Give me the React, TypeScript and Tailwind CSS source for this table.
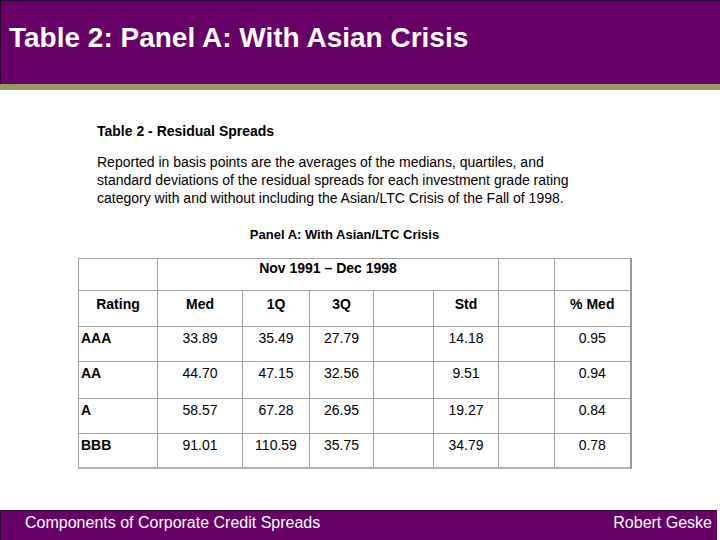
import React from "react";

const rows = [
  ["AAA", "33.89", "35.49", "27.79", "14.18", "0.95"],
  ["AA", "44.70", "47.15", "32.56", "9.51", "0.94"],
  ["A", "58.57", "67.28", "26.95", "19.27", "0.84"],
  ["BBB", "91.01", "110.59", "35.75", "34.79", "0.78"],
];

const rowH = ["h-[35px]", "h-[37px]", "h-[35px]", "h-[35px]"];

export default function App() {
  const cell = "border border-[#a3a3a3] align-top p-0";
  return (
    <div
      className="w-[720px] h-[540px] bg-white flex flex-col overflow-hidden text-black"
      style={{ fontFamily: '"Liberation Sans", Arial, sans-serif' }}
    >
      <div className="h-[84px] shrink-0 bg-[#660066] border-t border-l border-[#2b0a2b] pl-[8px] pt-[23px]">
        <h1 className="text-[28px] leading-[28px] font-bold text-white">
          Table 2: Panel A: With Asian Crisis
        </h1>
      </div>
      <div className="h-[6px] shrink-0 bg-[#999966]" />
      <div className="flex-1 flex flex-col">
        <div className="pl-[97px] pt-[33px]">
          <div className="text-[14px] leading-[17.5px] font-bold">Table 2 - Residual Spreads</div>
          <p className="mt-[12px] text-[14px] leading-[18px]">
            Reported in basis points are the averages of the medians, quartiles, and
            <br />
            standard deviations of the residual spreads for each investment grade rating
            <br />
            category with and without including the Asian/LTC Crisis of the Fall of 1998.
          </p>
        </div>
        <div className="mt-[20.5px] w-[689px] text-center text-[13px] leading-[16px] font-bold">
          Panel A: With Asian/LTC Crisis
        </div>
        <div className="pl-[78px] mt-[14.5px]">
          <table className="border-collapse table-fixed w-[552px] text-[14px] leading-[17.5px] border-r-2 border-r-[#9a9a9a] border-b-2 border-b-[#b0b0b0]">
            <colgroup>
              <col className="w-[79px]" />
              <col className="w-[85px]" />
              <col className="w-[67px]" />
              <col className="w-[64px]" />
              <col className="w-[60px]" />
              <col className="w-[65px]" />
              <col className="w-[56px]" />
              <col className="w-[76px]" />
            </colgroup>
            <tbody>
              <tr className="h-[32px]">
                <td className={cell} />
                <td className={`${cell} text-center font-bold pt-[1px]`} colSpan={5}>
                  Nov 1991 – Dec 1998
                </td>
                <td className={cell} />
                <td className={`${cell} border-r-2 border-r-[#9a9a9a]`} />
              </tr>
              <tr className="h-[36px] font-bold">
                <td className={`${cell} text-center pt-[5px]`}>Rating</td>
                <td className={`${cell} text-center pt-[5px]`}>Med</td>
                <td className={`${cell} text-center pt-[5px]`}>1Q</td>
                <td className={`${cell} text-center pt-[5px]`}>3Q</td>
                <td className={cell} />
                <td className={`${cell} text-center pt-[5px]`}>Std</td>
                <td className={cell} />
                <td className={`${cell} text-center pt-[5px] border-r-2 border-r-[#9a9a9a]`}>% Med</td>
              </tr>
              {rows.map((r, i) => (
                <tr key={r[0]} className={rowH[i]}>
                  <td className={`${cell} font-bold text-left pl-[2px] pt-[3px]`}>{r[0]}</td>
                  <td className={`${cell} text-center pt-[3px]`}>{r[1]}</td>
                  <td className={`${cell} text-center pt-[3px]`}>{r[2]}</td>
                  <td className={`${cell} text-center pt-[3px]`}>{r[3]}</td>
                  <td className={cell} />
                  <td className={`${cell} text-center pt-[3px]`}>{r[4]}</td>
                  <td className={cell} />
                  <td className={`${cell} text-center pt-[3px] border-r-2 border-r-[#9a9a9a]`}>{r[5]}</td>
                </tr>
              ))}
            </tbody>
          </table>
        </div>
      </div>
      <div className="h-[30px] shrink-0 w-[717px] bg-[#660066] border-t border-l border-[#2b0a2b] pt-[4px] pl-[24px] pr-[5px] flex justify-between text-white text-[16px] leading-[16px]">
        <span>Components of Corporate Credit Spreads</span>
        <span>Robert Geske</span>
      </div>
    </div>
  );
}
